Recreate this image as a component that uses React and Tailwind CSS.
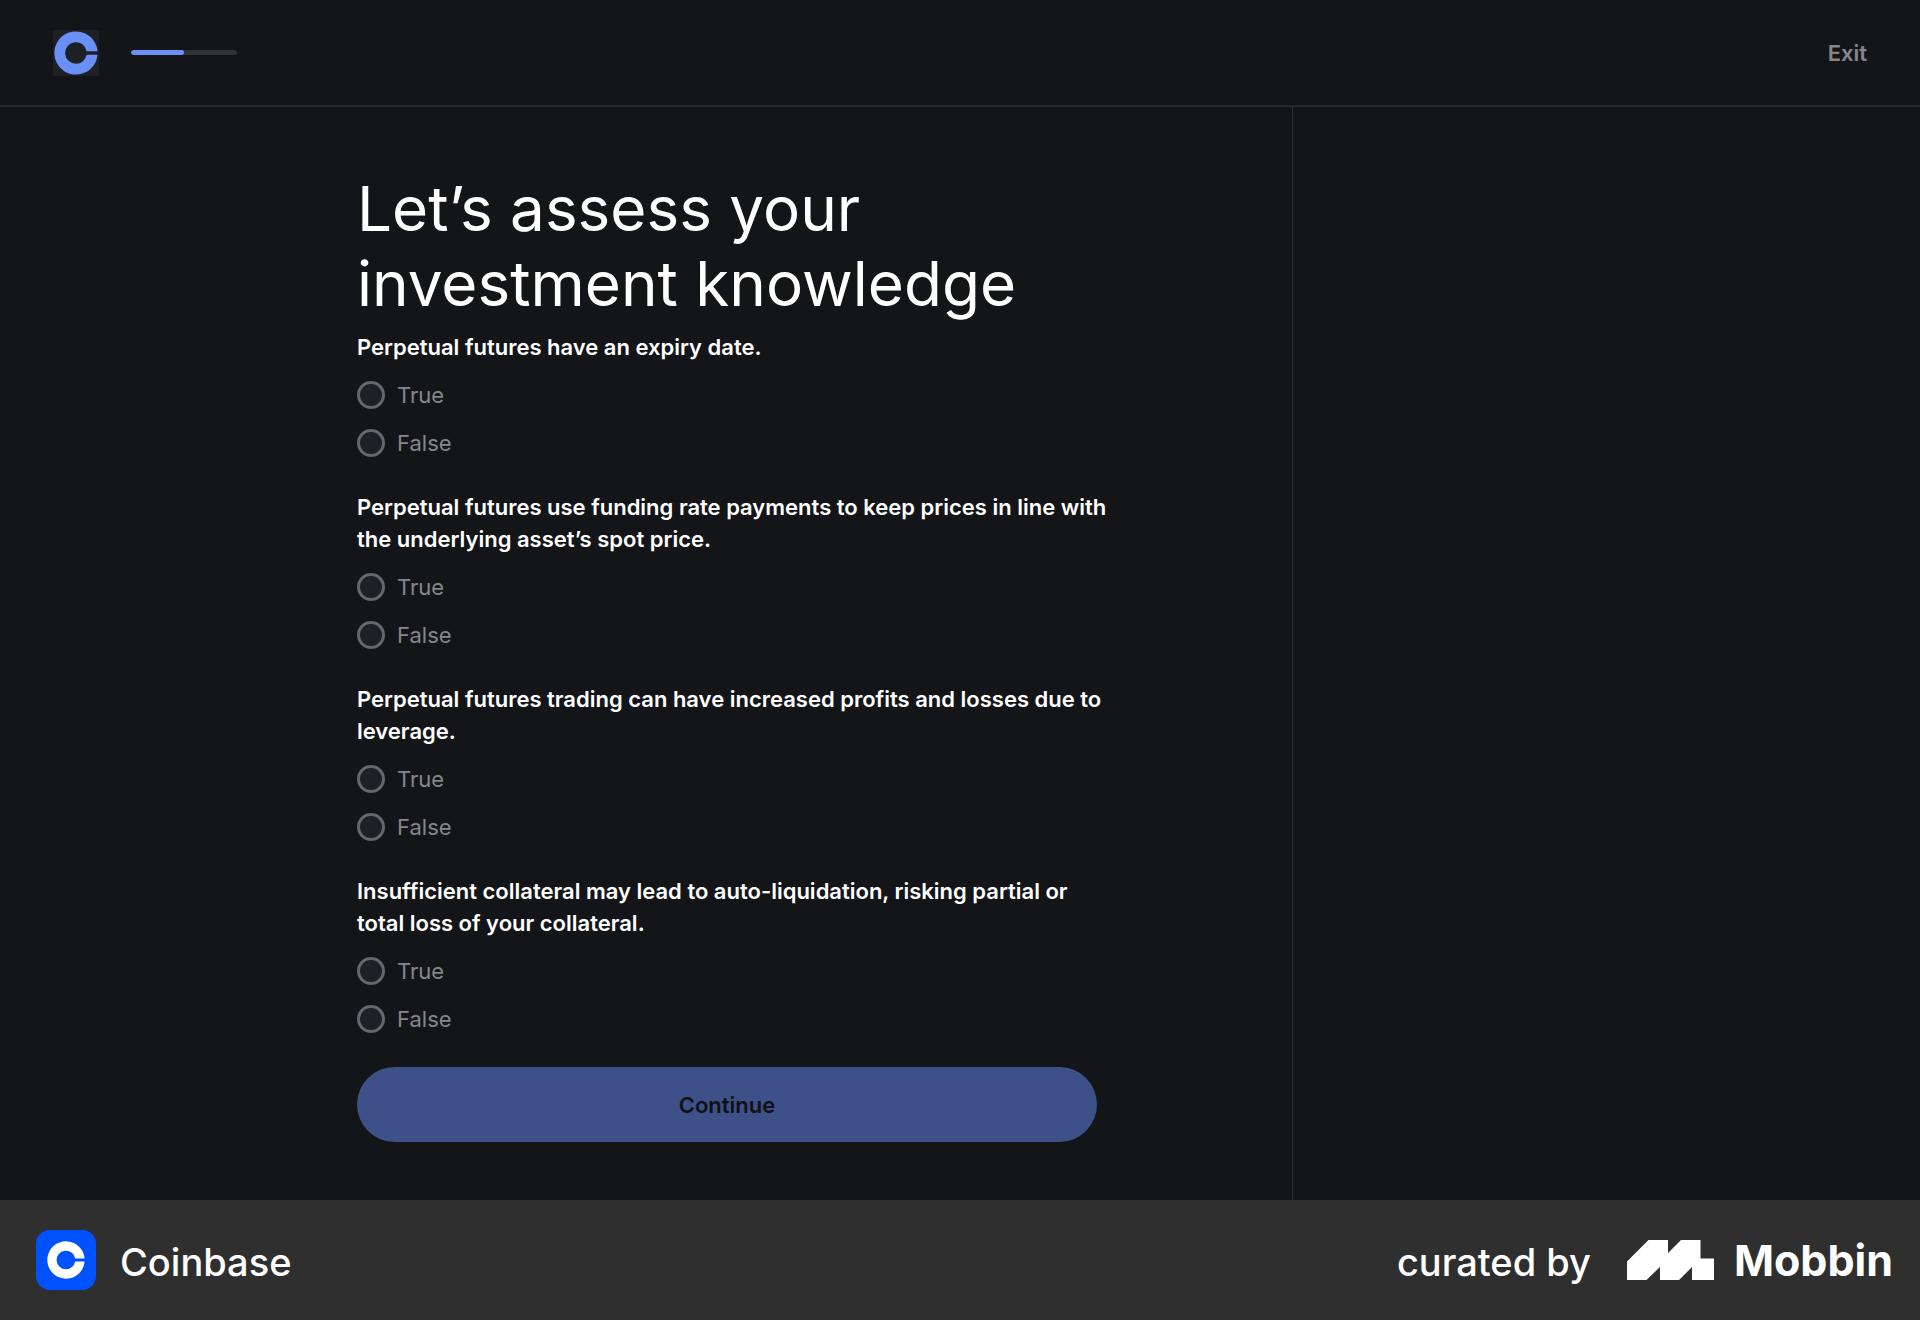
import React from "react";

const questions = [
  "Perpetual futures have an expiry date.",
  "Perpetual futures use funding rate payments to keep prices in line with\nthe underlying asset’s spot price.",
  "Perpetual futures trading can have increased profits and losses due to\nleverage.",
  "Insufficient collateral may lead to auto-liquidation, risking partial or\ntotal loss of your collateral.",
];

function CoinGlyph({ className }) {
  return (
    <svg viewBox="0 0 44 44" className={className} fill="currentColor" aria-hidden="true">
      <path d="M22 32.8a10.8 10.8 0 1 1 10.6-12.6h10.9a21.6 21.6 0 1 0 0 3.6H32.6A10.8 10.8 0 0 1 22 32.8z" />
    </svg>
  );
}

function Question({ index, text }) {
  return (
    <fieldset>
      <legend className="text-[22px] leading-8 font-semibold text-white lg:whitespace-pre">{text}</legend>
      <div className="mt-4 flex flex-col items-start gap-4">
        {["True", "False"].map((option) => (
          <label key={option} className="flex h-8 items-center gap-3 text-[22px] leading-8 text-[#85878d]">
            <input
              type="radio"
              name={`question-${index}`}
              value={option}
              className="size-7 appearance-none rounded-full border-3 border-[#64676d] bg-[#1e2025] checked:border-8 checked:border-[#6a8ff5]"
            />
            {option}
          </label>
        ))}
      </div>
    </fieldset>
  );
}

export default function App() {
  return (
    <div className="flex min-h-screen flex-col bg-[#141519] font-['Inter',sans-serif]">
      <header className="flex h-[107px] items-center justify-between border-b-2 border-[#282a2e] px-[53px]">
        <div className="flex items-center gap-8">
          <div className="flex size-[46px] items-center justify-center bg-[#1e2025]">
            <CoinGlyph className="size-11 text-[#6a8ff5]" />
          </div>
          <div className="flex h-[5px] w-[106px] overflow-hidden rounded-full bg-[#303135]" role="progressbar" aria-label="Progress" aria-valuenow={50}>
            <div className="w-1/2 rounded-full bg-[#6a8ff5]" />
          </div>
        </div>
        <button type="button" className="text-[22px] leading-8 font-semibold text-[#85878d]">Exit</button>
      </header>

      <div className="flex grow">
        <main className="flex grow justify-end border-r border-[#2e3034] pt-16 pr-[195px] pb-[58px]">
          <form className="flex w-[740px] flex-col">
            <h1 className="mb-[10px] text-[62px] leading-[75px] text-white">
              Let’s assess your
              <br />
              investment knowledge
            </h1>
            <div className="flex flex-col gap-8">
              {questions.map((text, index) => (
                <Question key={index} index={index} text={text} />
              ))}
            </div>
            <button type="button" className="mt-8 h-[75px] rounded-full bg-[#3e5088] text-[22px] leading-8 font-semibold text-[#0f1115]">
              Continue
            </button>
          </form>
        </main>
        <aside className="w-[627px] shrink-0" />
      </div>

      <footer className="flex h-[120px] items-center justify-between bg-[#2f2f2f] pr-[27px] pl-9 text-white">
        <div className="flex items-center gap-6">
          <div className="flex size-[60px] items-center justify-center rounded-[14px] bg-[#0052ff]">
            <CoinGlyph className="size-[38px] text-white" />
          </div>
          <span className="pt-1 text-[38px] leading-[48px] font-medium">Coinbase</span>
        </div>
        <div className="flex items-center gap-9">
          <span className="pt-1 text-[38px] leading-[48px] font-medium">curated by</span>
          <div className="flex items-center gap-5">
            <svg viewBox="0 0 87 40" className="h-10 w-[87px]" fill="currentColor" aria-hidden="true">
              <path d="M0 21.500L21.500 0H41v13L54 0H73.500v18.500H87V40H65V27L52 40H33V27L19.500 40H0z" />
            </svg>
            <span className="text-[43px] leading-[48px] font-bold">Mobbin</span>
          </div>
        </div>
      </footer>
    </div>
  );
}
